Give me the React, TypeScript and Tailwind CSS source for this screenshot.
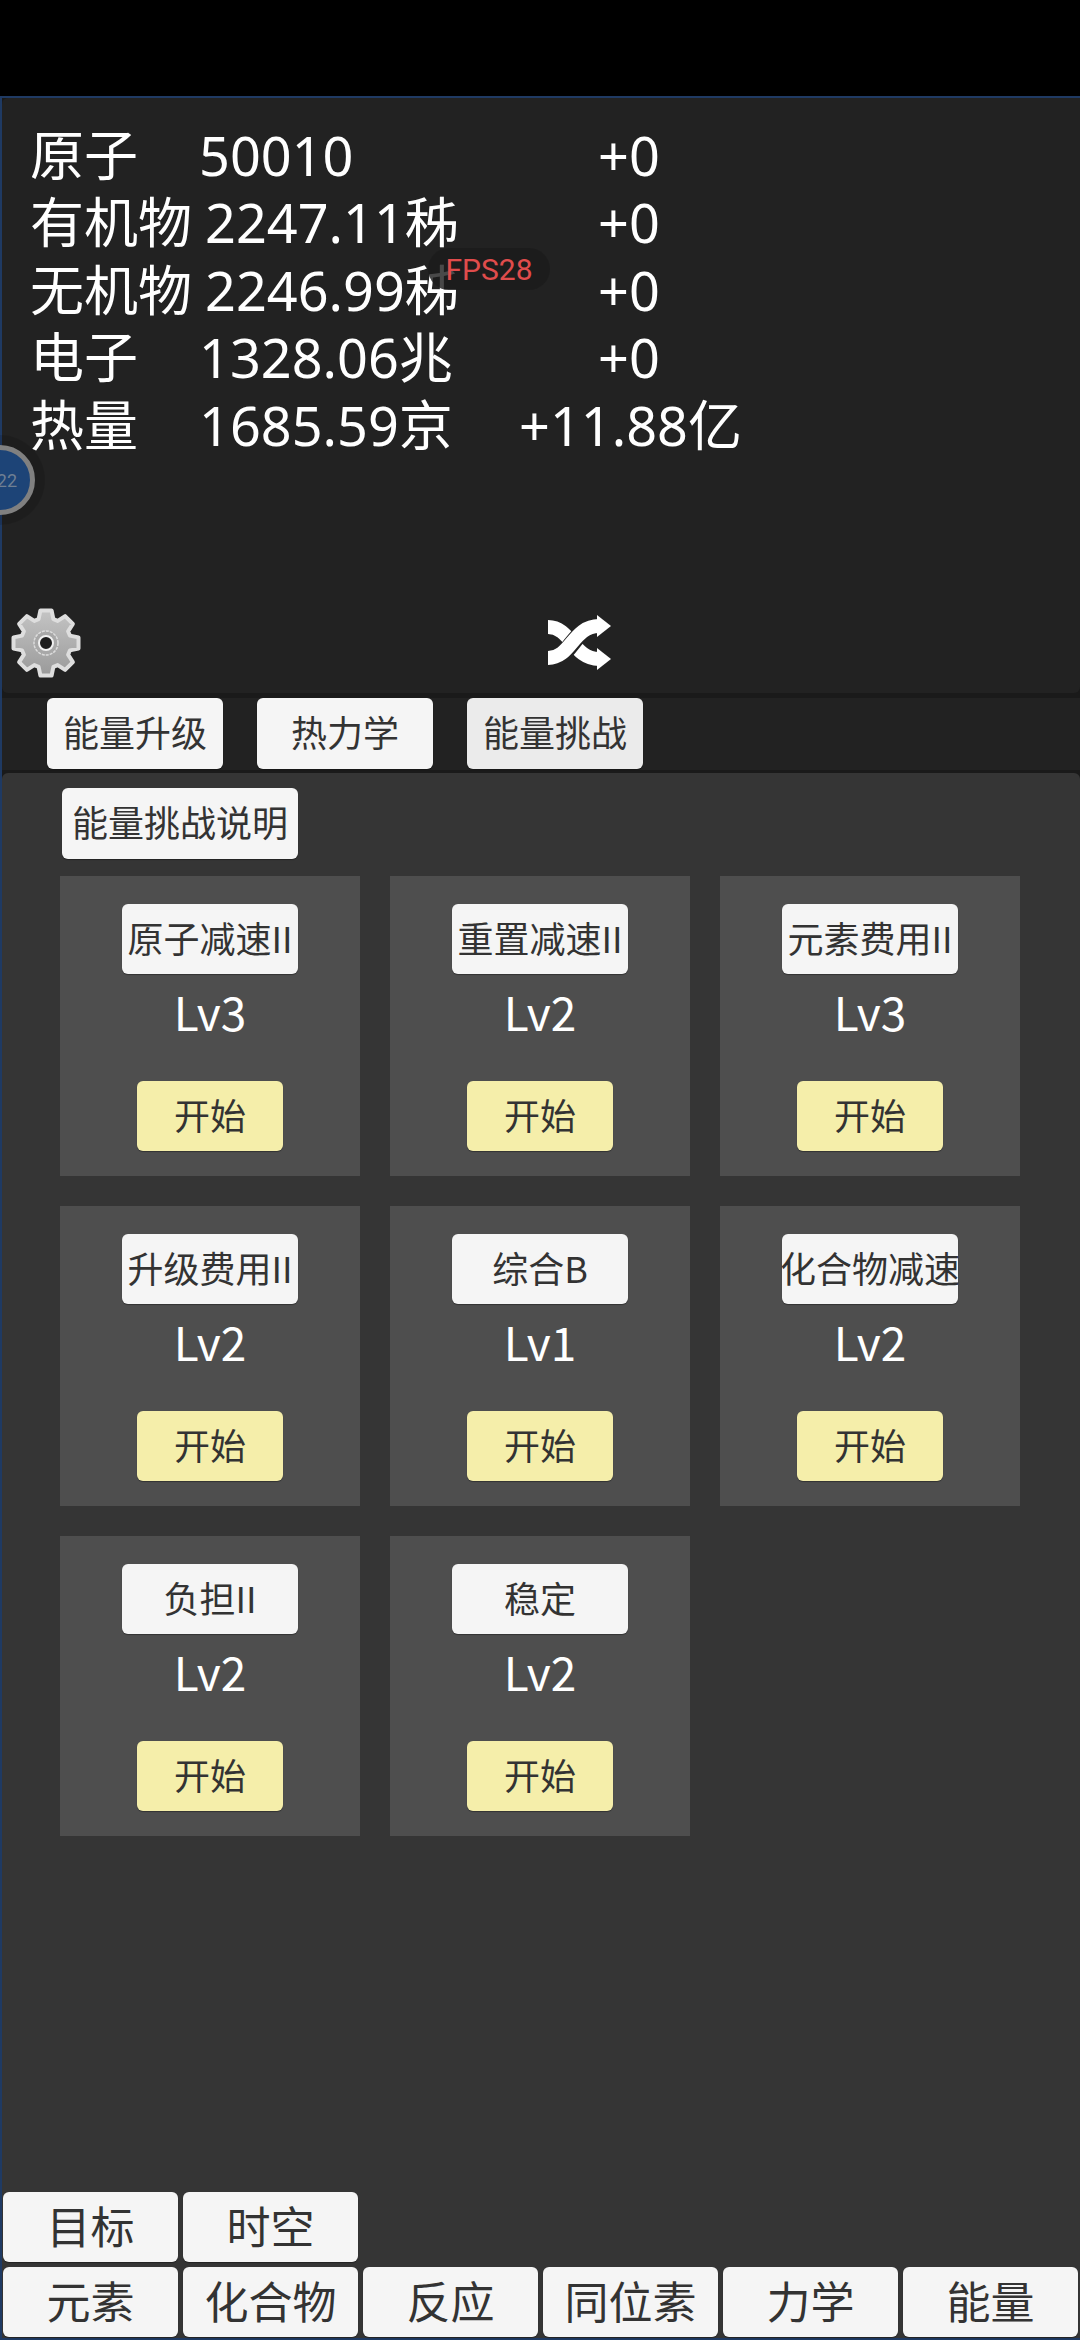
const sansStack = "font-['Noto_Sans','Noto_Sans_CJK_SC',sans-serif]";
const cjkStack = "font-['Noto_Sans_CJK_SC','Noto_Sans',sans-serif]";

const stats = [
  { label: "原子", value: "50010", rate: "+0" },
  { label: "有机物", value: "2247.11秭", rate: "+0" },
  { label: "无机物", value: "2246.99秭", rate: "+0" },
  { label: "电子", value: "1328.06兆", rate: "+0" },
  { label: "热量", value: "1685.59京", rate: "+11.88亿" },
];

const challenges = [
  { name: "原子减速II", level: 3 },
  { name: "重置减速II", level: 2 },
  { name: "元素费用II", level: 3 },
  { name: "升级费用II", level: 2 },
  { name: "综合B", level: 1 },
  { name: "化合物减速", level: 2 },
  { name: "负担II", level: 2 },
  { name: "稳定", level: 2 },
];

const tabs = ["能量升级", "热力学", "能量挑战"];
const navTop = ["目标", "时空"];
const navBottom = ["元素", "化合物", "反应", "同位素", "力学", "能量"];

// 8 tooth cog outline, centre 36,36
function gearPath() {
  const pts: string[] = [];
  for (let i = 0; i < 8; i++) {
    const a = (i * Math.PI) / 4 - Math.PI / 2;
    const step = [
      [-0.3, 25],
      [-0.17, 33],
      [0.17, 33],
      [0.3, 25],
    ];
    for (const [da, r] of step) {
      const x = 36 + r * Math.cos(a + da);
      const y = 36 + r * Math.sin(a + da);
      pts.push(`${x.toFixed(1)} ${y.toFixed(1)}`);
    }
  }
  return `M${pts.join("L")}Z`;
}

function Gear() {
  return (
    <svg viewBox="-2 -2 76 78" className="w-[76px] h-[78px]">
      <defs>
        <linearGradient id="gearFill" x1="0" y1="0" x2="0" y2="1">
          <stop offset="0" stopColor="#c4c4c4" />
          <stop offset="1" stopColor="#9a9a9a" />
        </linearGradient>
      </defs>
      <path
        d={gearPath()}
        fill="url(#gearFill)"
        stroke="#dedede"
        strokeWidth="4"
        strokeLinejoin="round"
      />
      <circle cx="36" cy="36" r="12" fill="#a8a8a8" stroke="#dcdcdc" strokeWidth="1.5" strokeDasharray="3 1" />
      <circle cx="36" cy="36" r="7" fill="#1c1c1c" stroke="#f0f0f0" strokeWidth="2" />
    </svg>
  );
}

function Shuffle() {
  return (
    <svg viewBox="0 0 65 55" className="w-[65px] h-[55px]" fill="none">
      <path d="M1 12C24 12 26 44 52 44" stroke="#fff" strokeWidth="14" />
      <path d="M1 45C24 45 26 11 52 11" stroke="#222" strokeWidth="17" />
      <path d="M1 43C24 43 26 11 52 11" stroke="#fff" strokeWidth="14" />
      <path d="M50 0L64 11L50 22Z" fill="#fff" />
      <path d="M50 33L64 44L50 55Z" fill="#fff" />
    </svg>
  );
}

function GameButton({ label, className }: { label: string; className: string }) {
  return (
    <div
      className={`flex items-center justify-center rounded-md whitespace-nowrap text-[#333] pb-[5px] shadow-[0_1px_1px_rgba(0,0,0,0.35)] ${cjkStack} ${className}`}
    >
      {label}
    </div>
  );
}

function ChallengeCard({ name, level }: { name: string; level: number }) {
  return (
    <div className="h-[300px] bg-[#4e4e4e] flex flex-col items-center pt-7">
      <GameButton label={name} className="w-[176px] h-[70px] bg-[#f5f5f5] text-[36px]" />
      <div className={`h-[70px] mt-0.5 flex items-center text-white text-[46px] ${cjkStack}`}>Lv{level}</div>
      <GameButton label="开始" className="w-[146px] h-[70px] mt-[35px] bg-[#f5eeaa] text-[36px]" />
    </div>
  );
}

export default function App() {
  return (
    <div className={`relative w-[1080px] h-[2340px] bg-black flex flex-col overflow-hidden ${sansStack}`}>
      <div className="h-[96px] shrink-0 bg-black" />
      <div className="flex-1 min-h-0 flex flex-col bg-[#1a1a1a] border-l-2 border-t-2 border-b-2 border-[#1f3a63]">
        {/* resource panel */}
        <div className="h-[595px] shrink-0 bg-[#222222] rounded-b-md rounded-tl-md flex flex-col pl-[28px] pt-[23px]">
          {stats.map((s) => (
            <div key={s.label} className="grid grid-cols-[489px_220px] h-[67.5px] items-center text-white text-[54px] leading-none">
              <div className="flex items-center whitespace-pre">
                <span className="min-w-[169px] pr-[13px]">{s.label}</span>
                <span>{s.value}</span>
              </div>
              <div className="text-center whitespace-nowrap">{s.rate}</div>
            </div>
          ))}
          <div className="mt-auto mb-[10px] -ml-[22px] flex items-center">
            <Gear />
            <div className="ml-[463px] mt-[-4px]">
              <Shuffle />
            </div>
          </div>
        </div>

        {/* sub tabs */}
        <div className="h-[72px] mt-[5px] shrink-0 bg-[#222222] flex gap-[34px] pl-[45px]">
          {tabs.map((t, i) => (
            <GameButton
              key={t}
              label={t}
              className={`w-[176px] h-[71px] text-[36px] ${i === 2 ? "bg-[#ebebeb]" : "bg-[#f5f5f5]"}`}
            />
          ))}
        </div>

        {/* challenges */}
        <div className="flex-1 min-h-0 mt-[3px] bg-[#353535] rounded-t-md flex flex-col">
          <div className="pt-[15px] pl-[60px]">
            <GameButton label="能量挑战说明" className="w-[236px] h-[71px] bg-[#f5f5f5] text-[36px]" />
          </div>
          <div className="grid grid-cols-[300px_300px_300px] gap-[30px] pl-[58px] mt-[17px]">
            {challenges.map((c) => (
              <ChallengeCard key={c.name} name={c.name} level={c.level} />
            ))}
          </div>

          <div className="mt-auto flex flex-col gap-[5px] pl-px pb-px">
            <div className="flex gap-[5px]">
              {navTop.map((n) => (
                <GameButton key={n} label={n} className="w-[175px] h-[70px] bg-[#f5f5f5] text-[44px]" />
              ))}
            </div>
            <div className="flex gap-[5px]">
              {navBottom.map((n) => (
                <GameButton key={n} label={n} className="w-[175px] h-[70px] bg-[#f5f5f5] text-[44px]" />
              ))}
            </div>
          </div>
        </div>
      </div>

      {/* floating overlays */}
      <div className="absolute left-[428px] top-[248px] w-[122px] h-[42px] rounded-full bg-[#1b1b1b]/80 flex items-center justify-center text-[#e04c4c] text-[30px] font-['Roboto',sans-serif]">
        FPS28
      </div>
      <div className="absolute -left-[35px] top-[445px] w-[70px] h-[70px] rounded-full bg-[#1d4477] border-[5px] border-[#808080] shadow-[0_0_0_10px_rgba(0,0,0,0.12)] flex items-center justify-end pr-[13px] text-[#6f7f93] text-[18px] font-['Roboto',sans-serif]">
        22
      </div>
    </div>
  );
}
